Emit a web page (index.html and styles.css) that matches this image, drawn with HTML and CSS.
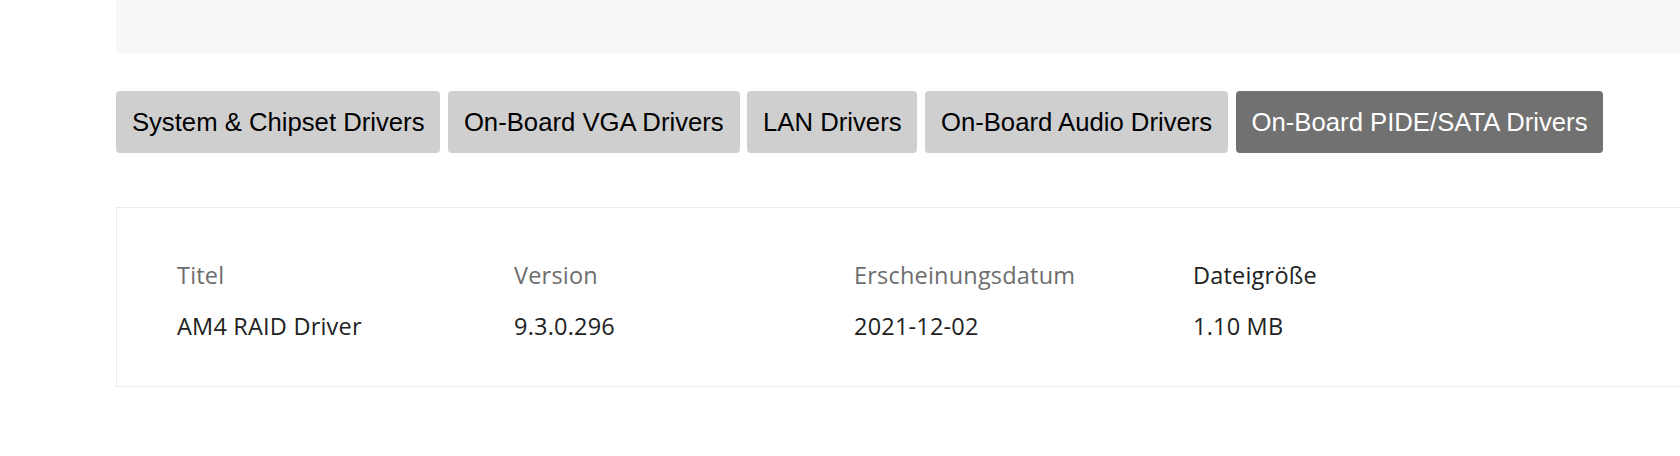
FILE: index.html
```html
<!DOCTYPE html>
<html lang="de">
<head>
<meta charset="utf-8">
<title>Treiber</title>
<link rel="stylesheet" href="styles.css">
</head>
<body>
<div class="page">
  <div class="banner"></div>
  <nav class="tabs">
    <button class="tab">System &amp; Chipset Drivers</button>
    <button class="tab">On-Board VGA Drivers</button>
    <button class="tab">LAN Drivers</button>
    <button class="tab">On-Board Audio Drivers</button>
    <button class="tab tab-active">On-Board PIDE/SATA Drivers</button>
  </nav>
  <section class="card">
    <div class="grid">
      <div class="th">Titel</div>
      <div class="th">Version</div>
      <div class="th">Erscheinungsdatum</div>
      <div class="th th-dark">Dateigröße</div>
      <div class="td">AM4 RAID Driver</div>
      <div class="td">9.3.0.296</div>
      <div class="td">2021-12-02</div>
      <div class="td">1.10 MB</div>
    </div>
  </section>
</div>
</body>
</html>
```

FILE: styles.css
```css
html, body {
  margin: 0;
  padding: 0;
  background: #ffffff;
  overflow: hidden;
}

.page {
  width: 1680px;
  padding-left: 116px;
  box-sizing: border-box;
  overflow: hidden;
}

.banner {
  width: 1700px;
  height: 53px;
  background: #f7f7f7;
}

.tabs {
  display: flex;
  gap: 7.6px;
  margin-top: 38px;
  height: 62px;
}

.tab {
  height: 62px;
  line-height: 62px;
  padding: 0 15.9px;
  border: none;
  border-radius: 4px;
  background: #cfcfcf;
  color: #000000;
  font-family: "Liberation Sans", Arial, sans-serif;
  font-size: 25.7px;
  white-space: nowrap;
  cursor: pointer;
}

.tab-active {
  background: #717171;
  color: #ffffff;
}

.card {
  margin-top: 54px;
  width: 1700px;
  height: 180px;
  box-sizing: border-box;
  border: 1px solid #ececec;
  padding: 42px 0 0 60px;
}

.grid {
  display: grid;
  grid-template-columns: 337px 340px 339px 339px;
  grid-auto-rows: 51px;
  font-family: "Open Sans", "Noto Sans", sans-serif;
  font-size: 23.5px;
  line-height: 51px;
  letter-spacing: 0.2px;
}

.th {
  color: #6d6d6d;
}

.th-dark {
  color: #222222;
}

.td {
  color: #222222;
}
```
